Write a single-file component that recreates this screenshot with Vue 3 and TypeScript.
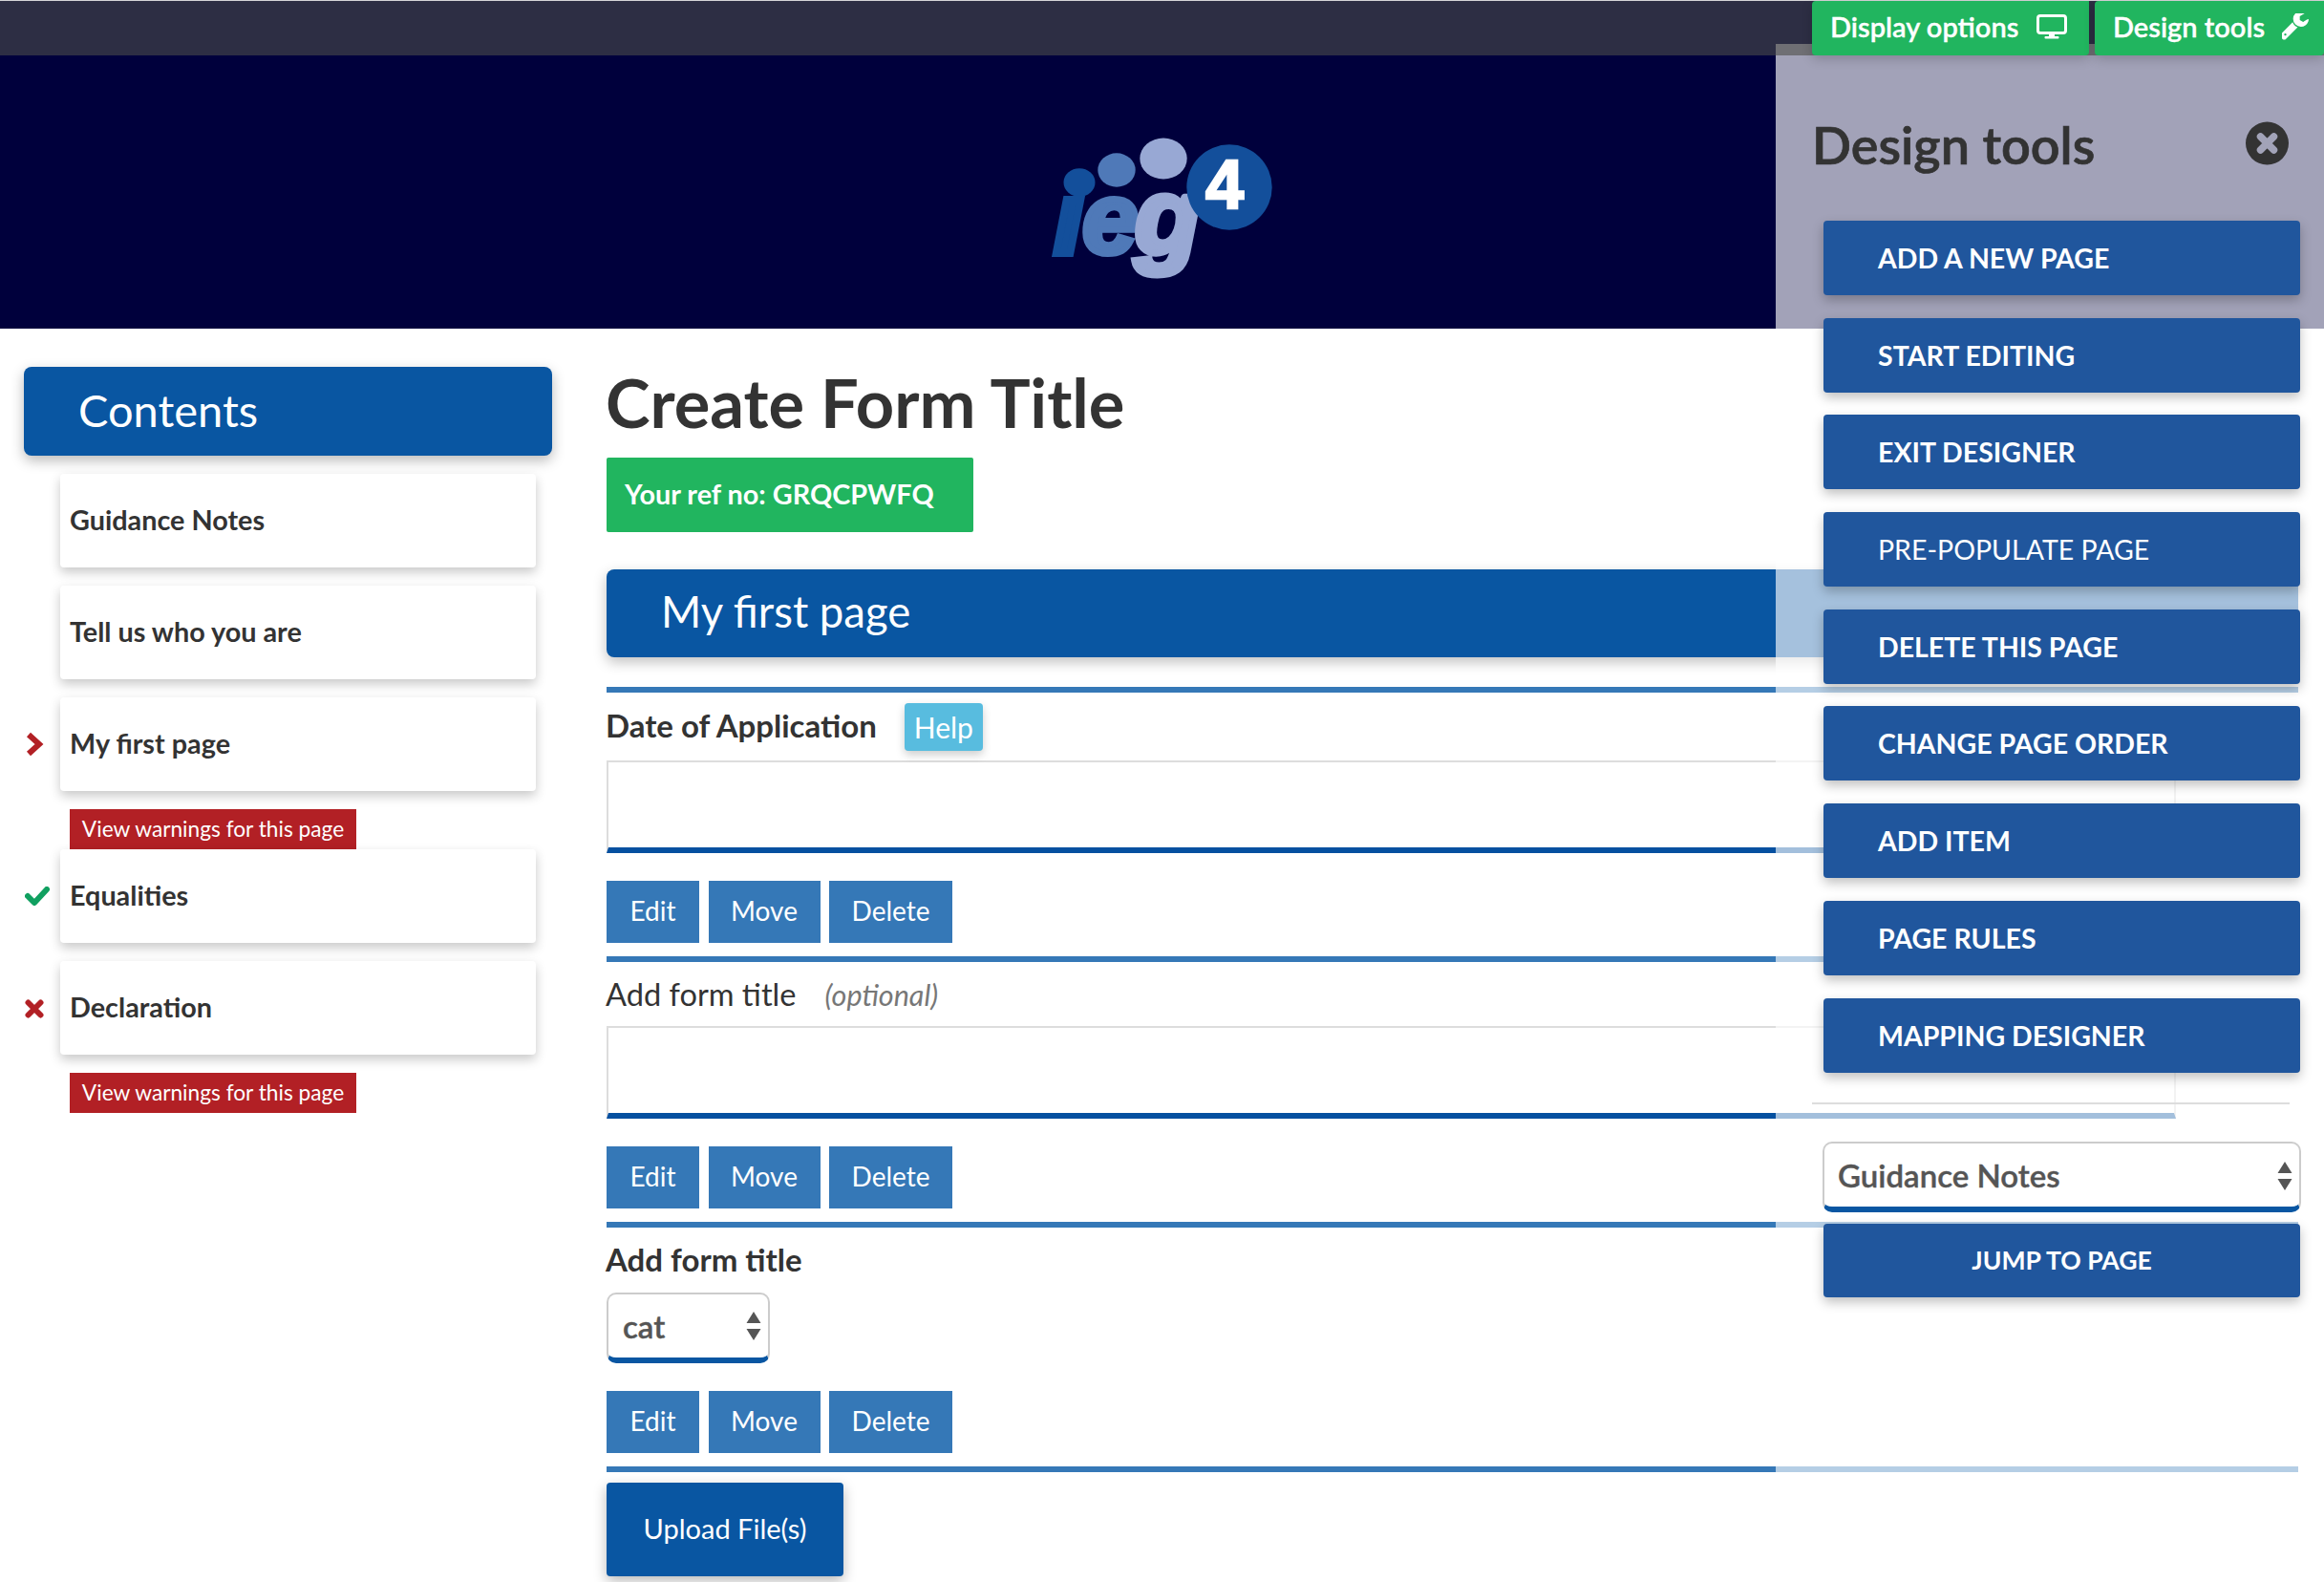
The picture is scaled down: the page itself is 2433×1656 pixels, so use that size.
<script setup lang="ts">
interface NavItem { label: string; status?: 'current' | 'ok' | 'error'; warning?: boolean }
const nav: NavItem[] = [
  { label: 'Guidance Notes' },
  { label: 'Tell us who you are' },
  { label: 'My first page', status: 'current', warning: true },
  { label: 'Equalities', status: 'ok' },
  { label: 'Declaration', status: 'error', warning: true },
]
const tools = ['ADD A NEW PAGE', 'START EDITING', 'EXIT DESIGNER', 'PRE-POPULATE PAGE', 'DELETE THIS PAGE', 'CHANGE PAGE ORDER', 'ADD ITEM', 'PAGE RULES', 'MAPPING DESIGNER']
const actions = ['Edit', 'Move', 'Delete']
</script>

<template>
  <div class="page">
    <div class="topbar">
      <button class="top-btn display"><span>Display options</span>
        <svg class="top-icon" width="32" height="26" viewBox="0 0 32 26"><rect x="1.5" y="1.5" width="29" height="18" rx="2.5" fill="none" stroke="#fff" stroke-width="3"/><rect x="13" y="20" width="6" height="3.5" fill="#fff"/><rect x="8.5" y="23" width="15" height="2.5" rx="1" fill="#fff"/></svg>
      </button>
      <button class="top-btn tools-btn"><span>Design tools</span>
        <svg class="top-icon" width="28" height="28" viewBox="128 128 1536 1536"><path fill="#fff" d="M384 1344q0-26-19-45t-45-19-45 19-19 45 19 45 45 19 45-19 19-45zm644-420l-682 682q-37 37-90 37-52 0-91-37l-106-108q-38-36-38-90 0-53 38-91l681-681q39 98 114.5 173.5t173.5 114.5zm634-435q0 39-23 106-47 134-164.5 217.5t-258.5 83.5q-185 0-316.5-131.5t-131.5-316.5 131.5-316.5 316.5-131.5q58 0 121.5 16.5t107.5 46.5q16 11 16 28t-16 28l-293 169v224l193 107q5-3 79-48.5t135.5-81 70.5-35.5q15 0 23.5 10t8.5 25z"/></svg>
      </button>
    </div>

    <header class="banner">
      <svg class="logo" width="240" height="180" viewBox="1096 111 240 180" role="img" aria-label="ieg4">
        <ellipse cx="1129" cy="191" rx="16.5" ry="14.7" fill="#134f9b"/>
        <ellipse cx="1168" cy="178" rx="19.7" ry="17.7" fill="#4f79b8"/>
        <ellipse cx="1217" cy="166" rx="24.7" ry="21.5" fill="#98a8d4"/>
        <text x="1103" y="265" class="logo-letter heavy" fill="#134f9b" stroke="#134f9b">ı</text>
        <text x="1132" y="265" class="logo-letter" fill="#4f79b8" stroke="#4f79b8">e</text>
        <text x="1187" y="265" class="logo-letter wide" fill="#98a8d4" stroke="#98a8d4">g</text>
        <circle cx="1286" cy="196" r="44.7" fill="#134f9b"/>
        <text x="1261" y="218" class="logo-four">4</text>
      </svg>
    </header>

    <div class="body">
      <aside class="sidebar">
        <h2 class="contents">Contents</h2>
        <template v-for="item in nav" :key="item.label">
          <div class="nav-row">
            <span class="nav-icon">
              <svg v-if="item.status === 'current'" width="20" height="26" viewBox="0 0 20 26"><path d="M4 3l11 10L4 23" fill="none" stroke="#b22025" stroke-width="6"/></svg>
              <svg v-else-if="item.status === 'ok'" width="26" height="20" viewBox="0 0 26 20"><path d="M3 10l7 7L23 3" fill="none" stroke="#10a060" stroke-width="6" stroke-linejoin="round" stroke-linecap="round"/></svg>
              <svg v-else-if="item.status === 'error'" class="x-icon" width="20" height="20" viewBox="0 0 20 20"><path d="M3.5 3.5l13 13M16.500 3.500l-13 13" fill="none" stroke="#b22025" stroke-width="6" stroke-linecap="round"/></svg>
            </span>
            <div class="nav-card"><span>{{ item.label }}</span></div>
          </div>
          <div v-if="item.warning" class="warning">View warnings for this page</div>
        </template>
      </aside>

      <main class="main">
        <h1 class="title">Create Form Title</h1>
        <div class="ref">Your ref no: GRQCPWFQ</div>
        <h2 class="section">My first page</h2>
        <hr class="rule first" />

        <div class="label-row r1">
          <label class="label strong">Date of Application</label>
          <button class="help">Help</button>
        </div>
        <input class="field" type="text" />
        <div class="actions"><button v-for="a in actions" :key="a" class="act" :class="a.toLowerCase()">{{ a }}</button></div>
        <hr class="rule" />

        <div class="label-row r2">
          <label class="label plain">Add form title</label>
          <em class="optional">(optional)</em>
        </div>
        <input class="field" type="text" />
        <div class="actions"><button v-for="a in actions" :key="a" class="act" :class="a.toLowerCase()">{{ a }}</button></div>
        <hr class="rule" />

        <div class="label-row r3">
          <label class="label strong">Add form title</label>
        </div>
        <div class="select cat">
          <span>cat</span>
          <svg class="arrows" width="16" height="30" viewBox="0 0 16 30"><path d="M8 0l7.500 12H.5zM8 30L.5 18h15z" fill="#555"/></svg>
        </div>
        <div class="actions"><button v-for="a in actions" :key="a" class="act" :class="a.toLowerCase()">{{ a }}</button></div>
        <hr class="rule" />

        <button class="upload">Upload File(s)</button>
      </main>
    </div>

    <section class="panel">
      <div class="panel-strip"></div>
      <div class="panel-head">
        <h2 class="panel-title">Design tools</h2>
        <svg class="close" width="45" height="46" viewBox="0 0 45 46"><circle cx="22.5" cy="23" r="22.500" fill="#333"/><path d="M15.500 16l14 14M29.500 16l-14 14" stroke="#a2a3b8" stroke-width="7.500" stroke-linecap="round"/></svg>
      </div>
      <div class="tool-list">
        <button v-for="t in tools" :key="t" class="tool" :class="{ faint: t === 'PRE-POPULATE PAGE' }">{{ t }}</button>
      </div>
      <hr class="panel-rule" />
      <div class="select jump-select">
        <span>Guidance Notes</span>
        <svg class="arrows" width="16" height="30" viewBox="0 0 16 30"><path d="M8 0l7.500 12H.5zM8 30L.5 18h15z" fill="#555"/></svg>
      </div>
      <button class="tool jump">JUMP TO PAGE</button>
    </section>
  </div>
</template>

<style scoped>
.page {
  position: relative;
  width: 2433px;
  height: 1656px;
  overflow: hidden;
  background: #fff;
  color: #333;
  font-family: Lato, "Open Sans", sans-serif;
}
button { font-family: inherit; border: 0; cursor: pointer; }

.topbar {
  height: 58px;
  box-sizing: border-box;
  border-top: 1px solid #d5d5d8;
  background: #2d2e44;
  display: flex;
  justify-content: flex-end;
  gap: 6px;
}
.top-btn {
  position: relative;
  z-index: 3;
  display: flex;
  align-items: center;
  height: 57px;
  background: #21b55f;
  color: #fff;
  font-size: 29px;
  font-weight: 600;
  -webkit-text-stroke: .35px #fff;
  padding: 0 0 4px 19px;
  border-radius: 4px 0 4px 4px;
  box-shadow: 0 4px 12px rgba(0, 0, 0, .18);
}
.display { width: 290px; }
.tools-btn { width: 240px; }
.display .top-icon { margin-left: 19px; }
.tools-btn .top-icon { margin-left: 18px; }

.banner {
  height: 286px;
  background: #00003c;
  display: flex;
  align-items: center;
  justify-content: center;
}
.logo { overflow: visible; }
.logo-letter {
  font-family: "Liberation Sans", sans-serif;
  font-weight: 700;
  font-style: italic;
  font-size: 106px;
  stroke-width: 6px;
}
.logo-letter.heavy { stroke-width: 8px; }
.logo-letter.wide { font-size: 112px; stroke-width: 7px; }
.logo-four {
  font-family: "Liberation Sans", sans-serif;
  font-weight: 700;
  font-size: 72px;
  fill: #fff;
  stroke: #fff;
  stroke-width: 2.5px;
}

.body { display: flex; align-items: flex-start; }

.sidebar { width: 553px; margin-left: 25px; padding-top: 40px; flex: none; }
.contents {
  margin: 0 0 19px;
  height: 93px;
  line-height: 90px;
  padding-left: 57px;
  background: #0956a2;
  color: #fff;
  font-size: 47px;
  font-weight: 400;
  border-radius: 8px;
  box-shadow: 0 5px 14px rgba(0, 0, 0, .28);
}
.nav-row { display: flex; align-items: center; margin-bottom: 19px; }
.nav-icon { width: 38px; flex: none; display: flex; align-items: center; padding-left: 1px; box-sizing: border-box; }
.x-icon { margin-top: 2px; }
.nav-card {
  width: 498px;
  height: 98px;
  box-sizing: border-box;
  padding: 0 0 3px 10px;
  display: flex;
  align-items: center;
  background: #fff;
  border-radius: 4px;
  font-size: 28.8px;
  font-weight: 700;
  box-shadow: 0 5px 12px rgba(0, 0, 0, .22);
}
.warning {
  width: 300px;
  height: 42px;
  line-height: 42px;
  margin-left: 48px;
  text-align: center;
  background: #b22025;
  color: #fff;
  font-size: 22.7px;
}

.main { margin-left: 57px; width: 1771px; flex: none; }
.title {
  margin: 0 0 0 -1px;
  height: 135px;
  padding-top: 19px;
  box-sizing: border-box;
  display: flex;
  align-items: center;
  font-size: 70.4px;
  font-weight: 700;
}
.ref {
  width: 384px;
  height: 78px;
  line-height: 76px;
  padding-left: 19px;
  box-sizing: border-box;
  background: #21b55f;
  color: #fff;
  font-size: 28.8px;
  font-weight: 700;
  border-radius: 2px;
}
.section {
  margin: 39px 0 0;
  height: 92px;
  line-height: 88px;
  padding-left: 57px;
  background: #0956a2;
  color: #fff;
  font-size: 45.5px;
  font-weight: 400;
  border-radius: 8px 0 0 8px;
  box-shadow: 0 5px 14px rgba(0, 0, 0, .25);
}
.rule {
  margin: 14px 0 0;
  height: 6px;
  border: 0;
  background: #3578b7;
}
.rule.first { margin-top: 31px; }
.label-row { display: flex; align-items: center; }
.r1 { height: 71px; }
.r2 { height: 67px; }
.r3 { height: 68px; }
.label { font-size: 33px; font-weight: 400; margin: -3px 0 0 -1px; }
.label.plain { font-size: 32.6px; margin-top: 0; }
.label.strong { font-weight: 700; }
.help {
  margin-left: 29px;
  width: 82px;
  height: 50px;
  background: #58bcdf;
  color: #fff;
  font-size: 30px;
  border-radius: 4px;
  box-shadow: 0 4px 10px rgba(0, 0, 0, .2);
}
.optional { margin-left: 30px; font-size: 30.500px; color: #777; font-style: italic; }
.field {
  display: block;
  width: 1643px;
  height: 97px;
  box-sizing: border-box;
  border: 2px solid #ddd;
  border-bottom: 6px solid #0550a0;
  outline: 0;
  background: #fff;
  padding: 0;
  margin: 0;
}
.actions { display: flex; gap: 9.5px; margin-top: 29px; }
.act {
  height: 65px;
  background: #3578b7;
  color: #fff;
  font-size: 28px;
  padding: 0 0 3px;
}
.act.edit { width: 97px; }
.act.move { width: 117px; }
.act.delete { width: 129px; }
.select {
  position: relative;
  box-sizing: border-box;
  display: flex;
  align-items: center;
  background: #fff;
  border: 2px solid #ccc;
  border-bottom: 6px solid #0956a2;
  border-radius: 10px;
  color: #555;
  font-size: 33px;
  font-weight: 600;
  -webkit-text-stroke: .4px #555;
}
.arrows { position: absolute; right: 7px; top: 19px; }
.select.cat { width: 171px; height: 74px; padding-left: 15px; }
.select.cat .arrows { top: 18px; }
.upload {
  display: block;
  margin-top: 11px;
  width: 248px;
  height: 98px;
  padding: 0 0 3px;
  background: #0956a2;
  color: #fff;
  font-size: 29px;
  border-radius: 4px;
  box-shadow: 0 5px 14px rgba(0, 0, 0, .28);
}

.panel {
  position: absolute;
  z-index: 2;
  left: 1859px;
  top: 46px;
  bottom: 0;
  width: 574px;
  background: rgba(255, 255, 255, .635);
}
.panel-strip { height: 12px; background: #6f6f74; }
.panel-head {
  display: flex;
  align-items: center;
  justify-content: space-between;
  height: 173px;
  padding: 14px 37px 0 38px;
  box-sizing: border-box;
}
.panel-title { margin: 0; font-size: 54px; font-weight: 600; color: #333; -webkit-text-stroke: .7px #333; }
.close { margin-top: -4px; }
.tool-list { display: flex; flex-direction: column; gap: 23.7px; margin-left: 50px; }
.tool {
  display: block;
  width: 499px;
  height: 78px;
  flex: none;
  text-align: left;
  padding: 0 0 0 57px;
  background: #20569d;
  color: #fff;
  font-size: 28.5px;
  font-weight: 700;
  border-radius: 4px;
  box-shadow: 0 5px 12px rgba(0, 0, 0, .25);
}
.tool.faint { font-weight: 400; }
.panel-rule { margin: 31px 36px 0 38px; height: 2px; background: #ddd; border: 0; }
.jump-select { width: 501px; height: 74px; margin: 39px 0 0 49px; padding-left: 14px; }
.tool.jump { margin: 12px 0 0 50px; text-align: center; padding: 0; height: 77px; font-size: 26.6px; }
</style>
